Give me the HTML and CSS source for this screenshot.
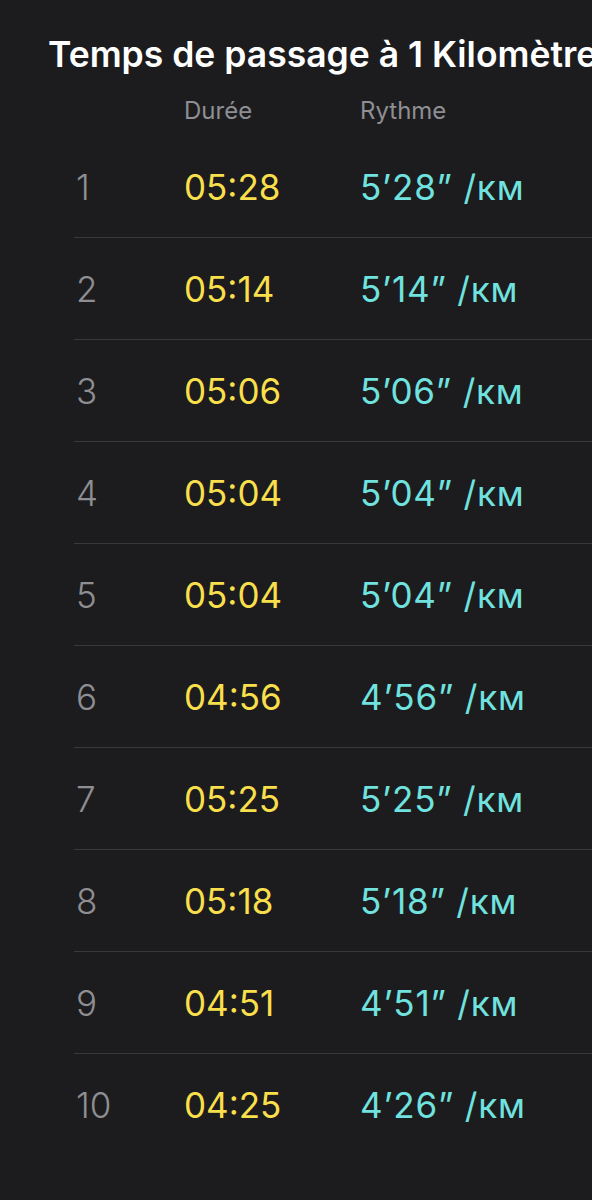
FILE: index.html
```html
<!DOCTYPE html>
<html lang="fr">
<head>
<meta charset="utf-8">
<link rel="stylesheet" href="styles.css">
</head>
<body>
<div class="page">
  <h1 class="title">Temps de passage à 1 Kilomètre</h1>
  <div class="table">
    <div class="head">
      <span class="c-num"></span>
      <span class="c-dur">Durée</span>
      <span class="c-pace">Rythme</span>
    </div>
    <div class="row"><span class="c-num">1</span><span class="c-dur">05:28</span><span class="c-pace">5’28” /км</span></div>
    <div class="row"><span class="c-num">2</span><span class="c-dur">05:14</span><span class="c-pace">5’14” /км</span></div>
    <div class="row"><span class="c-num">3</span><span class="c-dur">05:06</span><span class="c-pace">5’06” /км</span></div>
    <div class="row"><span class="c-num">4</span><span class="c-dur">05:04</span><span class="c-pace">5’04” /км</span></div>
    <div class="row"><span class="c-num">5</span><span class="c-dur">05:04</span><span class="c-pace">5’04” /км</span></div>
    <div class="row"><span class="c-num">6</span><span class="c-dur">04:56</span><span class="c-pace">4’56” /км</span></div>
    <div class="row"><span class="c-num">7</span><span class="c-dur">05:25</span><span class="c-pace">5’25” /км</span></div>
    <div class="row"><span class="c-num">8</span><span class="c-dur">05:18</span><span class="c-pace">5’18” /км</span></div>
    <div class="row"><span class="c-num">9</span><span class="c-dur">04:51</span><span class="c-pace">4’51” /км</span></div>
    <div class="row last"><span class="c-num">10</span><span class="c-dur">04:25</span><span class="c-pace">4’26” /км</span></div>
  </div>
</div>
</body>
</html>
```
FILE: styles.css
```css
html, body {
  margin: 0;
  padding: 0;
  background: #1c1c1e;
  overflow: hidden;
}
.page {
  width: 592px;
  height: 1200px;
  overflow: hidden;
  font-family: Inter, "Noto Sans", sans-serif;
}
.title {
  margin: 0;
  padding: 33px 0 0 48px;
  font-size: 35.5px;
  font-weight: 600;
  line-height: 44px;
  color: #ffffff;
  white-space: nowrap;
  letter-spacing: 0;
}
.table {
  margin-left: 74px;
}
.head {
  display: grid;
  grid-template-columns: 108px 176px 1fr;
  padding-left: 2px;
  padding-top: 8px;
  height: 51px;
  align-items: center;
  font-size: 24px;
  color: #8e8e93;
}
.head span { line-height: 30px; }
.row {
  display: grid;
  grid-template-columns: 108px 176px 1fr;
  padding-left: 2px;
  height: 101px;
  align-items: center;
  border-bottom: 1px solid #38383a;
  font-size: 35px;
  line-height: 40px;
}
.row.last { border-bottom: none; }
.c-num { color: #8e8e93; font-weight: 300; }
.row .c-dur { color: #f8df4b; font-weight: 400; }
.row .c-pace { color: #70e2df; font-weight: 400; letter-spacing: 0.8px; }
```
